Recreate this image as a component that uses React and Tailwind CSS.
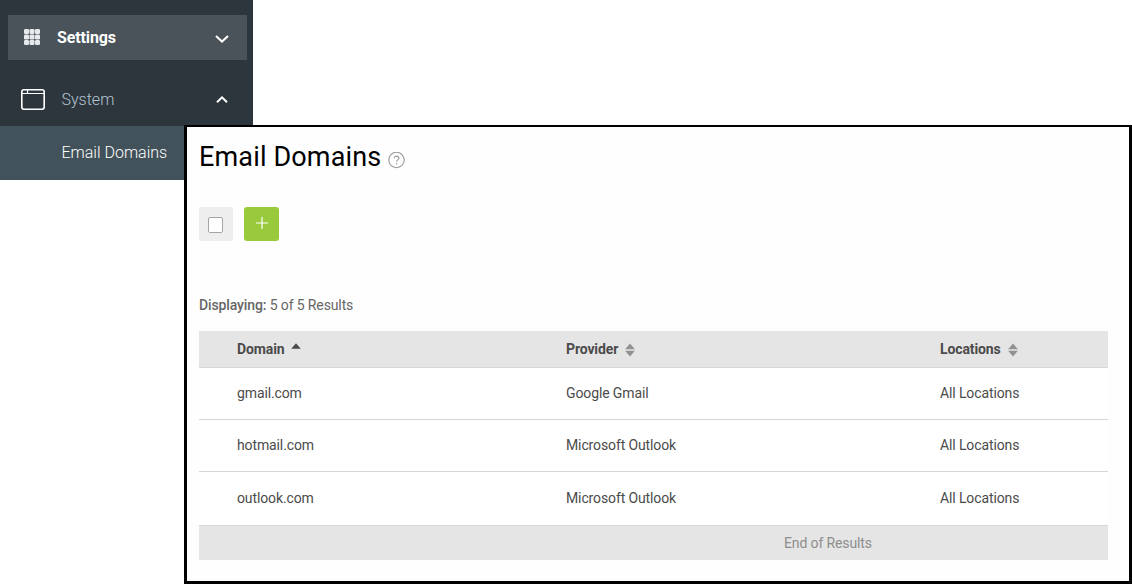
const rows = [
  { domain: 'gmail.com', provider: 'Google Gmail', height: 'h-[52px]' },
  { domain: 'hotmail.com', provider: 'Microsoft Outlook', height: 'h-[52px]' },
  { domain: 'outlook.com', provider: 'Microsoft Outlook', height: 'h-[54px]' },
];

function GridIcon() {
  return (
    <svg className="-mt-[2px] h-4 w-4" viewBox="0 0 16 16" fill="#e6eaec">
      {[0, 5.5, 11].map((y) =>
        [0, 5.5, 11].map((x) => <rect key={`${x}-${y}`} x={x} y={y} width="5" height="5" rx="1.2" />)
      )}
    </svg>
  );
}

function SortIcon() {
  return (
    <svg className="mt-px ml-[7px] h-[14px] w-[10px]" viewBox="0 0 10 14" fill="#929292">
      <path d="M5 .5 9.9 6.3H.1zM5 13.5 9.9 7.7H.1z" />
    </svg>
  );
}

function Sidebar() {
  return (
    <nav className="h-[180px] w-[253px] bg-[#2c363c] pt-[15px]">
      <div className="ml-2 flex h-[45px] w-[239px] items-center bg-[#495359] pl-4 text-white">
        <GridIcon />
        <span className="ml-[17px] text-base font-bold tracking-[-0.12px]">Settings</span>
        <svg className="mt-[2px] mr-[18px] ml-auto h-2 w-[14px]" viewBox="0 0 14 8" fill="none" stroke="white" strokeWidth="2">
          <path d="M1 1l6 5.6L13 1" />
        </svg>
      </div>
      <div className="flex h-[66px] items-center pt-3 pl-[21px]">
        <svg className="h-[21px] w-6" viewBox="0 0 24 21" fill="none" stroke="white" strokeWidth="1.6">
          <rect x=".8" y=".8" width="22.4" height="19.4" rx="2.2" />
          <path d="M1 4.5h22M6.5 1v3.5" strokeWidth="1.2" />
        </svg>
        <span className="mt-[2px] ml-[16.5px] text-base font-light text-[#b3c3d0]">System</span>
        <svg className="mr-[25px] ml-auto h-[7px] w-3" viewBox="0 0 12 7" fill="none" stroke="white" strokeWidth="2">
          <path d="M1 6.2l5-4.8 5 4.8" />
        </svg>
      </div>
      <div className="flex h-[54px] items-center bg-[#42525a] pl-[61.5px] text-base font-light text-white">Email Domains</div>
    </nav>
  );
}

export default function App() {
  return (
    <div className="relative h-[584px] w-[1132px] overflow-hidden bg-white font-[Roboto,sans-serif]">
      <Sidebar />
      <main className="absolute top-[125px] left-[184px] h-[459px] w-[948px] border-[3px] border-t-2 border-black bg-[#fefefe] pr-[21px] pl-3 text-sm tracking-[-0.12px] text-[#4b4b4b]">
        <header className="flex h-[60px] items-center">
          <h1 className="text-[27px] leading-8 tracking-[0.15px] text-black">Email Domains</h1>
          <svg className="mt-[6px] ml-[7px] h-[17px] w-[17px]" viewBox="0 0 17 17" fill="none" stroke="#999" strokeWidth="1.1">
            <circle cx="8.5" cy="8" r="7.7" />
            <path d="M6.2 6.3c0-3 4.7-2.8 4.7-.1 0 1.8-2.3 1.6-2.3 3.5M8.6 10.9v1.4" />
          </svg>
        </header>
        <div className="mt-5 flex h-[34px] gap-[11px]">
          <div className="flex w-[34px] items-center justify-center rounded-xs bg-[#eee]">
            <span className="mt-[2px] mr-px h-4 w-[15px] rounded-xs border border-[#a5a5a5] bg-white" />
          </div>
          <button className="flex w-[35px] items-start justify-center rounded-[3px] bg-[#99ca3c] pt-[10px]">
            <svg className="h-3 w-3" viewBox="0 0 12 12" stroke="white" strokeWidth="1.2">
              <path d="M0 6h12M6 0v12" />
            </svg>
          </button>
        </div>
        <p className="mt-[54px] h-5 leading-5 text-[#666]"><span className="font-medium">Displaying:</span> 5 of 5 Results</p>
        <div className="mt-4 w-[909px]">
          <div className="grid h-[37px] grid-cols-[329px_374px_1fr] items-center border-b border-[#d6d6d6] bg-[#e5e5e5] pl-[38px] font-bold">
            <div className="flex items-center">Domain
              <svg className="mb-[6px] ml-[7px] h-[6px] w-[10px]" viewBox="0 0 10 6" fill="#4b4b4b"><path d="M5 .3 9.8 5.7H.2z" /></svg>
            </div>
            <div className="flex items-center">Provider<SortIcon /></div>
            <div className="flex items-center">Locations<SortIcon /></div>
          </div>
          {rows.map((row) => (
            <div key={row.domain} className={`grid grid-cols-[329px_374px_1fr] items-center border-b border-[#d6d6d6] bg-white pb-[2px] pl-[38px] ${row.height}`}>
              <span>{row.domain}</span>
              <span>{row.provider}</span>
              <span>All Locations</span>
            </div>
          ))}
          <div className="flex h-[34px] items-center bg-[#e5e5e5] pl-[585px] text-[#8d8d8d]">End of Results</div>
        </div>
      </main>
    </div>
  );
}
